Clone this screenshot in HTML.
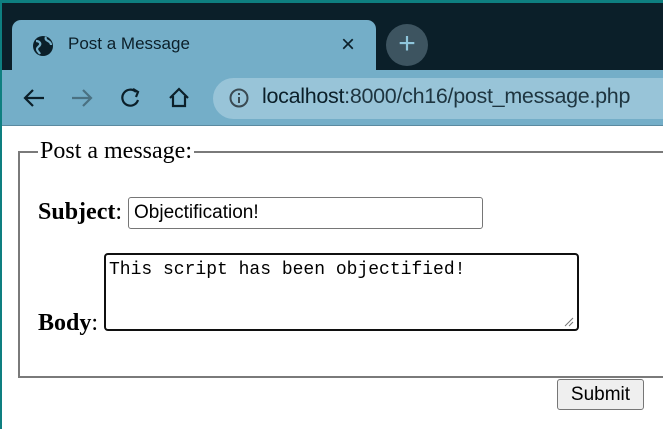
<!DOCTYPE html>
<html><head><style>
*{margin:0;padding:0;box-sizing:border-box}
body{width:663px;height:429px;overflow:hidden;background:#fff;position:relative;font-family:"Liberation Serif",serif}
.abs{position:absolute}
</style></head><body>
<div class="abs" style="left:0;top:0;width:663px;height:126px;background:#0b1f29"></div>
<div class="abs" style="left:0;top:0;width:663px;height:3px;background:#0e7f80"></div>
<div class="abs" style="left:0;top:0;width:2px;height:429px;background:#0e7f80"></div>
<div class="abs" style="left:12px;top:20px;width:364px;height:60px;background:#74aec8;border-radius:9px 9px 0 0"></div>
<div class="abs" style="left:2px;top:70px;width:661px;height:56px;background:#74aec8"></div>
<div class="abs" style="left:2px;top:125px;width:661px;height:1px;background:#5b8aa0"></div>
<svg class="abs" style="left:32px;top:35px" width="22" height="22" viewBox="0 0 22 22"><circle cx="11" cy="11" r="10" fill="#0b1f29"/><path d="M4 6c3 0 5 2 4 4s-3 2-3 4c0 2 2 3 3 5M14 2c-1 2 0 3 2 4s3 2 3 4" stroke="#74aec8" stroke-width="2.2" fill="none"/></svg>
<div class="abs" style="left:68px;top:34px;font:17px 'Liberation Sans',sans-serif;color:#0b1f29">Post a Message</div>
<div class="abs" style="left:341px;top:31px;font:24px 'Liberation Sans',sans-serif;color:#0b1f29">×</div>
<div class="abs" style="left:386px;top:24px;width:42px;height:42px;border-radius:50%;background:#3d5460;color:#8fc6dc;font:30px 'Liberation Sans',sans-serif;text-align:center;line-height:40px">+</div>
<svg class="abs" style="left:22px;top:86px" width="130" height="24" viewBox="0 0 130 24" fill="none" stroke-width="2.2">
<path d="M22 12H4M11 4l-8 8 8 8" stroke="#0b1f29"/>
<path d="M50 12h18M61 4l8 8-8 8" stroke="#4a7182"/>
<path d="M114 6a8 8 0 1 0 2 8" stroke="#0b1f29"/><path d="M111 3l5 3-2 5" stroke="#0b1f29"/>
</svg>
<svg class="abs" style="left:166px;top:85px" width="26" height="26" viewBox="0 0 26 26" fill="none" stroke="#0b1f29" stroke-width="2.2"><path d="M4 13L13 4l9 9M7 11v10h12V11"/></svg>
<div class="abs" style="left:213px;top:78px;width:470px;height:41px;border-radius:21px;background:#98c4d8"></div>
<svg class="abs" style="left:228px;top:87px" width="22" height="22" viewBox="0 0 22 22"><circle cx="11" cy="11" r="8.5" fill="none" stroke="#3a4a52" stroke-width="2"/><path d="M11 10v6M11 6v2" stroke="#3a4a52" stroke-width="2"/></svg>
<div class="abs" style="left:262px;top:84px;font:21.5px 'Liberation Sans',sans-serif;color:#1e3540;letter-spacing:-0.3px"><span style="color:#0b1f29">localhost</span>:8000/ch16/post_message.php</div>

<div class="abs" style="left:18px;top:151px;width:660px;height:227px;border:2px solid #7a7a7a"></div>
<div class="abs" style="left:38px;top:136px;background:#fff;padding:0 2px;font-size:24px;color:#000;line-height:30px">Post a message:</div>
<div class="abs" style="left:38px;top:197px;font-size:24px;line-height:30px"><b>Subject</b>:</div>
<div class="abs" style="left:128px;top:197px;width:355px;height:32px;border:1px solid #767676;border-radius:3px;font:19px 'Liberation Sans',sans-serif;padding:4px 5px;color:#000">Objectification!</div>
<div class="abs" style="left:38px;top:308px;font-size:24px;line-height:30px"><b>Body</b>:</div>
<div class="abs" style="left:104px;top:253px;width:475px;height:78px;border:2px solid #101010;border-radius:4px;font:18px 'Liberation Mono','DejaVu Sans Mono',monospace;padding:5px 3px;color:#000">This script has been objectified!</div>
<svg class="abs" style="left:563px;top:316px" width="12" height="12"><path d="M2 10L10 2M6 10l4-4" stroke="#777" stroke-width="1"/></svg>
<div class="abs" style="left:557px;top:379px;width:87px;height:31px;border:1px solid #767676;border-radius:3px;background:#efefef;font:19px 'Liberation Sans',sans-serif;text-align:center;line-height:29px;color:#000">Submit</div>
</body></html>
